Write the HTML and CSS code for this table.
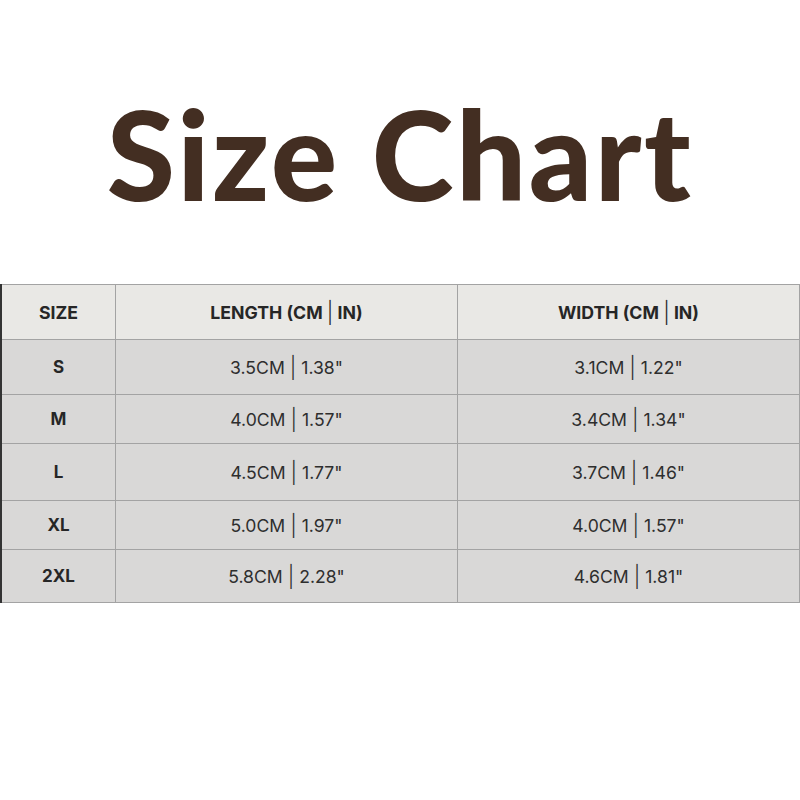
FILE: index.html
```html
<!DOCTYPE html>
<html>
<head>
<meta charset="utf-8">
<link rel="stylesheet" href="styles.css">
</head>
<body>
<h1 class="title">Size Chart</h1>
<table class="chart">
  <thead>
    <tr class="r-head"><th class="c-size">SIZE</th><th class="c-len">LENGTH (CM <span class="bar">|</span> IN)</th><th class="c-wid">WIDTH (CM <span class="bar">|</span> IN)</th></tr>
  </thead>
  <tbody>
    <tr class="r1"><th>S</th><td>3.5CM <span class="bar">|</span> 1.38"</td><td>3.1CM <span class="bar">|</span> 1.22"</td></tr>
    <tr class="r2"><th>M</th><td>4.0CM <span class="bar">|</span> 1.57"</td><td>3.4CM <span class="bar">|</span> 1.34"</td></tr>
    <tr class="r3"><th>L</th><td>4.5CM <span class="bar">|</span> 1.77"</td><td>3.7CM <span class="bar">|</span> 1.46"</td></tr>
    <tr class="r4"><th>XL</th><td>5.0CM <span class="bar">|</span> 1.97"</td><td>4.0CM <span class="bar">|</span> 1.57"</td></tr>
    <tr class="r5"><th>2XL</th><td>5.8CM <span class="bar">|</span> 2.28"</td><td>4.6CM <span class="bar">|</span> 1.81"</td></tr>
  </tbody>
</table>
</body>
</html>
```
FILE: styles.css
```css
html, body {
  margin: 0;
  padding: 0;
  background: #ffffff;
}
.title {
  margin: 0;
  height: 284px;
  box-sizing: border-box;
  padding-top: 78px;
  text-align: center;
  font-family: "Lato", sans-serif;
  font-weight: 900;
  font-size: 124px;
  line-height: 150px;
  color: #432e22;
  letter-spacing: 2.5px;
}
.chart {
  width: 800px;
  border-collapse: collapse;
  font-family: "Inter", sans-serif;
  color: #2e2e2e;
  border-left: 2px solid #333;
}
.chart th, .chart td {
  border: 1px solid #a3a3a3;
  text-align: center;
  padding: 0;
}
.chart thead th {
  background: #e9e8e5;
  font-size: 17.7px;
  font-weight: 700;
  color: #262626;
}
.chart tbody th {
  font-weight: 700;
  font-size: 17px;
  color: #262626;
}
.chart tbody th, .chart tbody td {
  background: #d9d8d7;
}
.chart tbody td {
  font-size: 17.6px;
  font-weight: 400;
}
.bar {
  font-size: 21px;
  font-weight: 300;
  line-height: 1;
  vertical-align: -1px;
}
.c-size { width: 113px; }
.c-len { width: 341px; }
.r-head { height: 55px; }
.r1 { height: 55px; }
.r2 { height: 49px; }
.r3 { height: 57px; }
.r4 { height: 49px; }
.r5 { height: 53px; }
```
